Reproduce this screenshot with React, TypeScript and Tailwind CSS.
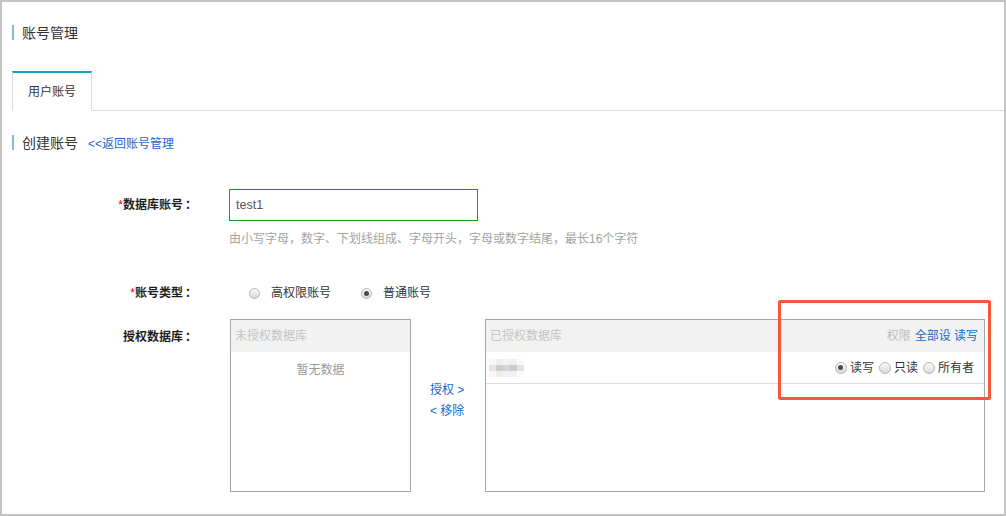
import React from "react";

function Radio({ checked, size = 12 }: { checked?: boolean; size?: number }) {
  return (
    <span
      className={
        (size === 12 ? "w-[12px] h-[12px]" : "w-[11px] h-[11px]") +
        " inline-flex items-center justify-center rounded-full border border-[#b4b4b4] bg-linear-to-b from-[#fbfbfb] to-[#d9d9d9] shrink-0"
      }
    >
      {checked ? <span className="w-[5px] h-[5px] rounded-full bg-[#4a4a4a]" /> : null}
    </span>
  );
}

const blur = [
  ["#f6f6f6", "#efefef", "#f3f3f3", "#efefef", "#f9f9f9"],
  ["#e7e2de", "#cdcdcd", "#d2d5d9", "#c9c8ca", "#e4e4e8"],
  ["#faf6f4", "#f0eded", "#eef2f4", "#f2f2f2", "#fbfbfb"],
];

export default function App() {
  return (
    <div className="relative w-[1006px] h-[516px] overflow-hidden border-2 border-[#c3c3c3] bg-white text-[12px] text-[#333] font-['Liberation_Sans','Noto_Sans_CJK_SC',sans-serif]">
      {/* Title */}
      <div className="mt-[23px] pl-[10px] flex items-center h-[15px]">
        <span className="w-[2px] h-[15px] bg-[#8bb6e0]" />
        <span className="ml-[8px] text-[14px] leading-[15px] mt-[2px]">账号管理</span>
      </div>

      {/* Tabs */}
      <div className="mt-[31px] ml-[10px] flex h-[40px]">
        <div className="w-[80px] h-full border-t-2 border-t-[#0aa3cc] border-x border-x-[#dcdcdc] flex items-center justify-center bg-white">
          <span className="leading-[16px]">用户账号</span>
        </div>
        <div className="flex-1 border-b border-[#dcdcdc]" />
      </div>

      {/* Section header */}
      <div className="mt-[24px] pl-[10px] flex items-center h-[15px]">
        <span className="w-[2px] h-[15px] bg-[#8bb6e0]" />
        <span className="ml-[8px] text-[14px] leading-[15px] mt-[2px]">创建账号</span>
        <a className="ml-[10px] text-[#1769c9] leading-[15px] mt-[3px]">&lt;&lt;返回账号管理</a>
      </div>

      {/* Row 1 */}
      <div className="mt-[39px] flex">
        <div className="w-[195px] h-[32px] leading-[32px] text-right font-bold text-[#1e1e1e]">
          <span className="text-[#e60000] font-normal">*</span>数据库账号<span className="ml-[2px]">：</span>
        </div>
        <div className="ml-[32px]">
          <div className="w-[249px] h-[32px] border border-[#1d9a1d] flex items-center pl-[6px] text-[#555] text-[12.5px]">
            test1
          </div>
          <div className="mt-[9px] leading-[18px] text-[#a3a3a3]">
            由小写字母，数字、下划线组成、字母开头，字母或数字结尾，最长16个字符
          </div>
        </div>
      </div>

      {/* Row 2 */}
      <div className="mt-[35px] flex items-center h-[20px]">
        <div className="w-[195px] text-right font-bold text-[#1e1e1e] leading-[20px]">
          <span className="text-[#e60000] font-normal">*</span>账号类型<span className="ml-[2px]">：</span>
        </div>
        <div className="ml-[52px] flex items-center">
          <Radio size={11} />
          <span className="ml-[11px]">高权限账号</span>
          <span className="ml-[30px]" />
          <Radio size={11} checked />
          <span className="ml-[11px]">普通账号</span>
        </div>
      </div>

      {/* Row 3 */}
      <div className="mt-[16px] flex">
        <div className="w-[195px] pt-[2px] h-[33px] leading-[32px] text-right font-bold text-[#1e1e1e]">
          授权数据库<span className="ml-[2px]">：</span>
        </div>
        <div className="ml-[33px] w-[181px] h-[173px] border border-[#a6a6a6] flex flex-col">
          <div className="h-[32px] leading-[32px] bg-[#f2f2f2] pl-[4px] text-[#c4c4c4]">未授权数据库</div>
          <div className="mt-[9px] leading-[18px] text-center text-[#9a9a9a]">暂无数据</div>
        </div>
        <div className="w-[74px] pl-[19px] pt-[61px] flex flex-col text-[#1769c9] leading-[21px]">
          <a>授权 &gt;</a>
          <a>&lt; 移除</a>
        </div>
        <div className="w-[500px] h-[173px] border border-[#a6a6a6] flex flex-col">
          <div className="h-[32px] bg-[#f2f2f2] pl-[4px] pr-[6px] flex items-center justify-between">
            <span className="text-[#c4c4c4]">已授权数据库</span>
            <span>
              <span className="text-[#bdbdbd]">权限</span>
              <span className="ml-[4px] text-[#1769c9]">全部设 读写</span>
            </span>
          </div>
          <div className="h-[32px] border-b border-[#dedede] pl-[3px] pr-[10px] flex items-center justify-between">
            <div className="grid grid-cols-[7px_7px_7px_7px_7px] grid-rows-[6px_6px_6px]">
              {blur.flat().map((c, i) => (
                <span key={i} style={{ backgroundColor: c }} />
              ))}
            </div>
            <div className="flex items-center">
              <Radio checked />
              <span className="ml-[3px]">读写</span>
              <span className="ml-[5px]" />
              <Radio />
              <span className="ml-[3px]">只读</span>
              <span className="ml-[5px]" />
              <Radio />
              <span className="ml-[3px]">所有者</span>
            </div>
          </div>
        </div>
      </div>

      {/* Annotation box */}
      <div className="absolute left-[776px] top-[298px] w-[213px] h-[100px] border-[3px] border-[#f4583a] rounded-[2px]" />
    </div>
  );
}
